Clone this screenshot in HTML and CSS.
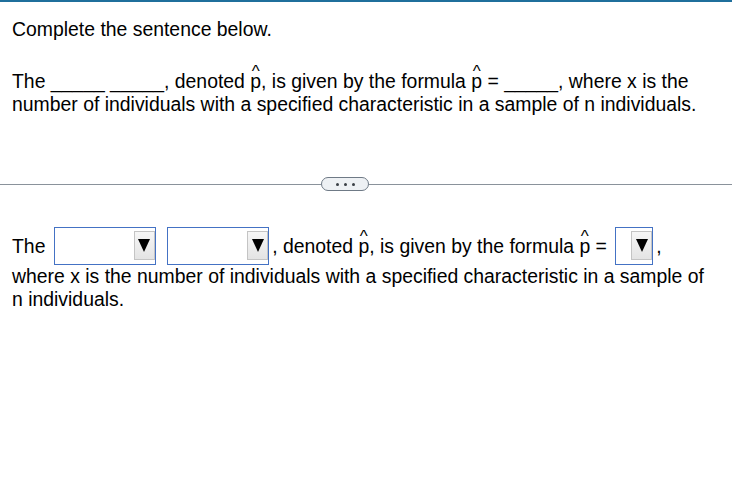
FILE: index.html
```html
<!DOCTYPE html>
<html lang="en">
<head>
<meta charset="utf-8">
<title>Complete the sentence</title>
<link rel="stylesheet" href="styles.css">
</head>
<body>
<div class="topbar"></div>
<section class="content">
  <p class="prompt">Complete the sentence below.</p>
  <p class="sentence">The _____ _____, denoted <span class="hat"><span class="caret">^</span>p</span>, is given by the formula <span class="hat"><span class="caret">^</span>p</span> = _____, where x is the number of individuals with a specified characteristic in a sample of n individuals.</p>
</section>
<div class="divider">
  <span class="rule rule-left"></span>
  <button class="more" type="button"><span class="dot"></span><span class="dot"></span><span class="dot"></span></button>
  <span class="rule"></span>
</div>
<section class="content">
  <p class="answer">The <span class="select wide"><span class="arrow"><svg width="12" height="13" viewBox="0 0 12 13"><polygon points="0,0 12,0 6,13" fill="#000"/></svg></span></span> <span class="select wide"><span class="arrow"><svg width="12" height="13" viewBox="0 0 12 13"><polygon points="0,0 12,0 6,13" fill="#000"/></svg></span></span>, denoted <span class="hat"><span class="caret">^</span>p</span>, is given by the formula <span class="hat"><span class="caret">^</span>p</span> = <span class="select narrow"><span class="arrow"><svg width="12" height="13" viewBox="0 0 12 13"><polygon points="0,0 12,0 6,13" fill="#000"/></svg></span></span>, where x is the number of individuals with a specified characteristic in a sample of n individuals.</p>
</section>
</body>
</html>
```
FILE: styles.css
```css
html, body {
  margin: 0;
  padding: 0;
  background: #fff;
}
body {
  font-family: "Liberation Sans", Arial, sans-serif;
  font-size: 19.4px;
  line-height: 23px;
  color: #000;
}
.topbar {
  height: 2px;
  background: #1f6f9c;
}
.content {
  padding: 0 21px 0 12px;
}
.prompt {
  margin: 16px 0 0;
}
.sentence {
  margin: 29px 0 0;
}
.hat {
  position: relative;
  display: inline-block;
}
.caret {
  position: absolute;
  left: 50%;
  top: -7px;
  transform: translateX(-50%);
  font-size: 17px;
  line-height: 17px;
}
.divider {
  display: flex;
  align-items: center;
  margin-top: 61px;
  height: 14px;
}
.rule {
  flex: 1;
  height: 1px;
  background: #8a929b;
}
.rule-left {
  flex: 0 0 321px;
}
.more {
  display: flex;
  align-items: center;
  justify-content: center;
  gap: 5px;
  width: 48px;
  height: 14px;
  padding: 0;
  margin: 0;
  border: 1px solid #6f7a86;
  border-radius: 7px;
  background: #eef1f4;
}
.dot {
  width: 3px;
  height: 3px;
  border-radius: 50%;
  background: #3a3f45;
}
.answer {
  margin: 36px 0 0;
}
.select {
  display: inline-block;
  box-sizing: border-box;
  height: 38px;
  margin: 0 3px;
  border: 1px solid #4472c4;
  background: #fff;
  vertical-align: -12px;
  overflow: hidden;
  position: relative;
}
.select.wide {
  width: 102px;
}
.select.narrow {
  width: 38px;
}
.arrow {
  display: flex;
  align-items: center;
  justify-content: center;
  box-sizing: border-box;
  width: 21px;
  height: 29px;
  margin: 3px 0 0 auto;
  border: 1px solid #c4c4c4;
  background: linear-gradient(#f6f6f6, #e4e4e4);
}
.arrow svg {
  display: block;
}
```
